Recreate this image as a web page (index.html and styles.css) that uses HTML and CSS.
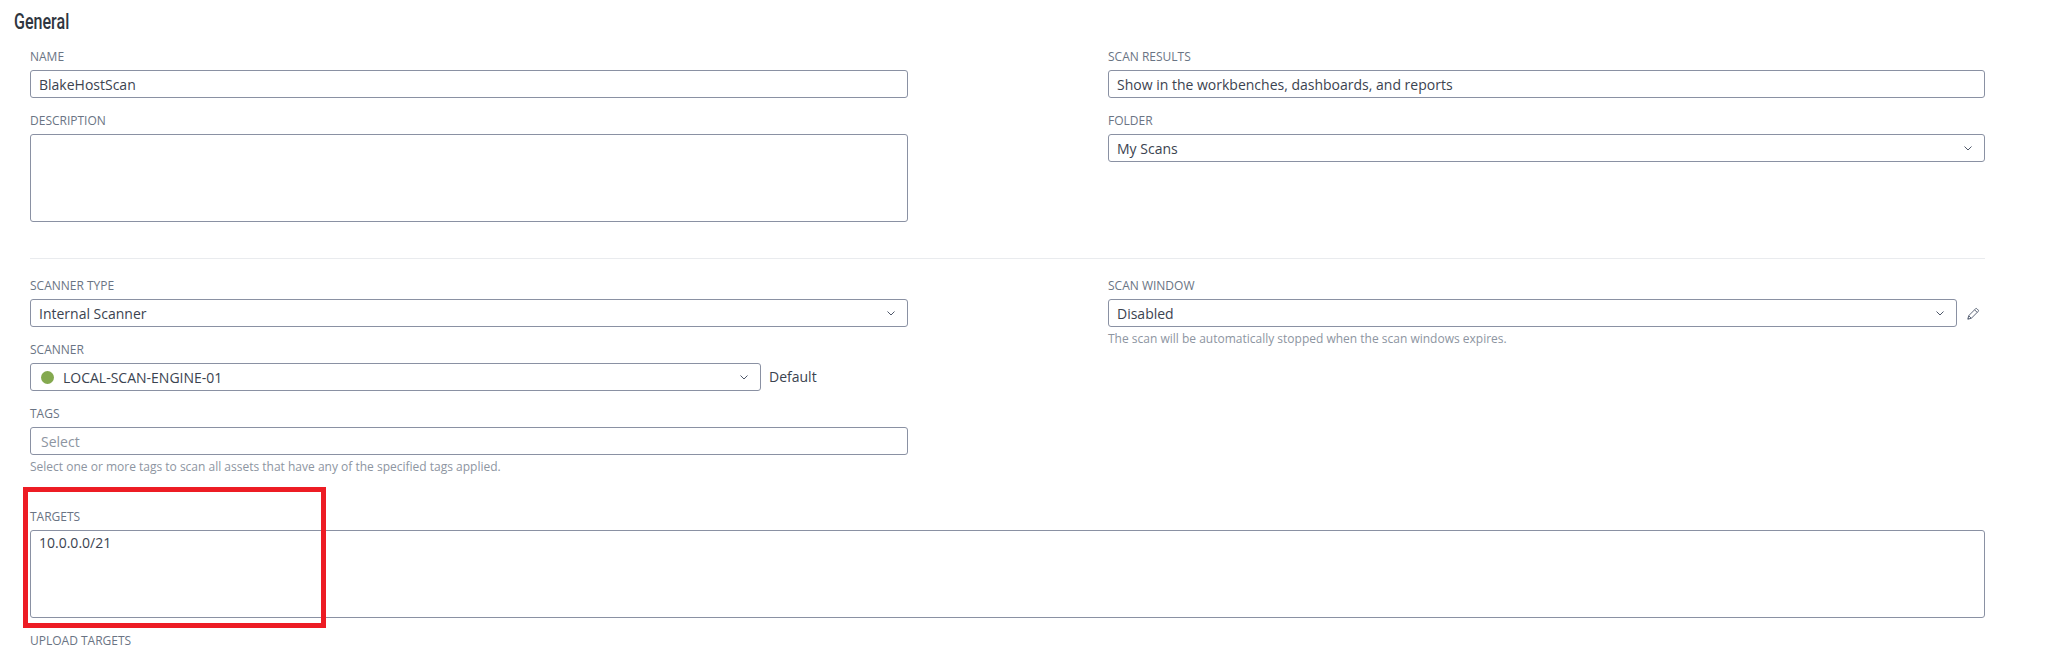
FILE: index.html
```html
<!DOCTYPE html>
<html lang="en">
<head>
<meta charset="utf-8">
<title>General</title>
<link rel="stylesheet" href="styles.css">
</head>
<body>
<main class="page">
  <h2 class="heading">General</h2>
  <div class="fields">
    <div class="grid">
      <div class="col">
        <div class="field"><div class="label">Name</div><div class="control">BlakeHostScan</div></div>
        <div class="field"><div class="label">Description</div><div class="control area"></div></div>
      </div>
      <div class="col">
        <div class="field"><div class="label">Scan Results</div><div class="control">Show in the workbenches, dashboards, and reports</div></div>
        <div class="field"><div class="label">Folder</div><div class="control select">My Scans<svg class="chev" viewBox="0 0 8 5"><path d="M.5.5L4 4 7.5.5"/></svg></div></div>
      </div>
    </div>
    <hr class="divider">
    <div class="grid">
      <div class="col">
        <div class="field"><div class="label">Scanner Type</div><div class="control select">Internal Scanner<svg class="chev" viewBox="0 0 8 5"><path d="M.5.5L4 4 7.5.5"/></svg></div></div>
        <div class="field"><div class="label">Scanner</div>
          <div class="with-side">
            <div class="control select scanner"><span class="dot"></span>LOCAL-SCAN-ENGINE-01<svg class="chev" viewBox="0 0 8 5"><path d="M.5.5L4 4 7.5.5"/></svg></div>
            <span class="side-text">Default</span>
          </div>
        </div>
        <div class="field"><div class="label">Tags</div><div class="control placeholder">Select</div><div class="hint">Select one or more tags to scan all assets that have any of the specified tags applied.</div></div>
      </div>
      <div class="col">
        <div class="field"><div class="label">Scan Window</div>
          <div class="with-side">
            <div class="control select grow">Disabled<svg class="chev" viewBox="0 0 8 5"><path d="M.5.5L4 4 7.5.5"/></svg></div>
            <svg class="pencil" viewBox="0 0 13 13"><path d="M.8 12.2l.9-3.5 6.9-6.9a1 1 0 0 1 1.4 0l1.2 1.2a1 1 0 0 1 0 1.4l-6.9 6.9z"/><path d="M1.7 8.7l2.6 2.6M7.6 2.8l2.6 2.6"/><path class="tip" d="M.8 12.2l.4-1.9 1.5 1.5z"/></svg>
          </div>
          <div class="hint">The scan will be automatically stopped when the scan windows expires.</div>
        </div>
      </div>
    </div>
    <div class="field targets"><div class="label">Targets</div><div class="control area">10.0.0.0/21</div></div>
    <div class="field"><div class="label">Upload Targets</div></div>
  </div>
  <div class="callout"></div>
</main>
</body>
</html>
```

FILE: styles.css
```css
* { box-sizing: border-box; }
html, body { margin: 0; padding: 0; background: #fff; height: 656px; overflow: hidden; }
body { font-family: "Open Sans", "Noto Sans", sans-serif; font-size: 14px; color: #3b4350; }
.page { position: relative; padding: 8px 63px 0 14px; }
.heading { margin: 0; height: 26px; font-family: Roboto, "Liberation Sans", sans-serif; font-weight: 500; font-size: 22px; line-height: 28px; color: #2f3640; transform: scaleX(.73); transform-origin: left center; }
.fields { padding-left: 16px; }
.grid { display: grid; grid-template-columns: 878px 877px; column-gap: 200px; }
.field { padding-top: 15px; }
.label { height: 16px; margin-bottom: 5px; font-size: 12px; line-height: 16px; text-transform: uppercase; color: #6a7484; }
.control { position: relative; display: flex; align-items: center; height: 28px; padding: 0 8px; border: 1px solid #8a91a3; border-radius: 3px; background: #fff; font-size: 14px; color: #3b4350; }
.control.area { height: 88px; align-items: flex-start; padding-top: 2px; line-height: 20px; }
.placeholder { color: #8d95a1; padding-left: 10px; }
.select { padding-right: 30px; }
.chev { position: absolute; right: 12px; top: 11px; width: 8px; height: 5px; fill: none; stroke: #4f586a; stroke-width: 1; }
.divider { height: 1px; margin: 36px 0 4px; border: 0; background: #e9ebee; }
.with-side { display: flex; align-items: center; }
.scanner { width: 731px; }
.grow { flex: 1; }
.side-text { margin: 0 0 2px 8px; color: #3b4350; }
.dot { width: 13px; height: 13px; margin: 0 9px 0 2px; border-radius: 50%; background: #84a94f; }
.pencil { width: 13px; height: 13px; margin: 0 5px 0 10px; flex: none; fill: none; stroke: #5f687a; stroke-width: 1; }
.pencil .tip { fill: #5f687a; stroke: none; }
.hint { margin-top: 4px; height: 16px; font-size: 12px; line-height: 16px; color: #8d95a1; }
.targets { margin-top: 19px; }
.callout { position: absolute; left: 23px; top: 487px; width: 303px; height: 141px; border: 5px solid #ed1c24; }
```
